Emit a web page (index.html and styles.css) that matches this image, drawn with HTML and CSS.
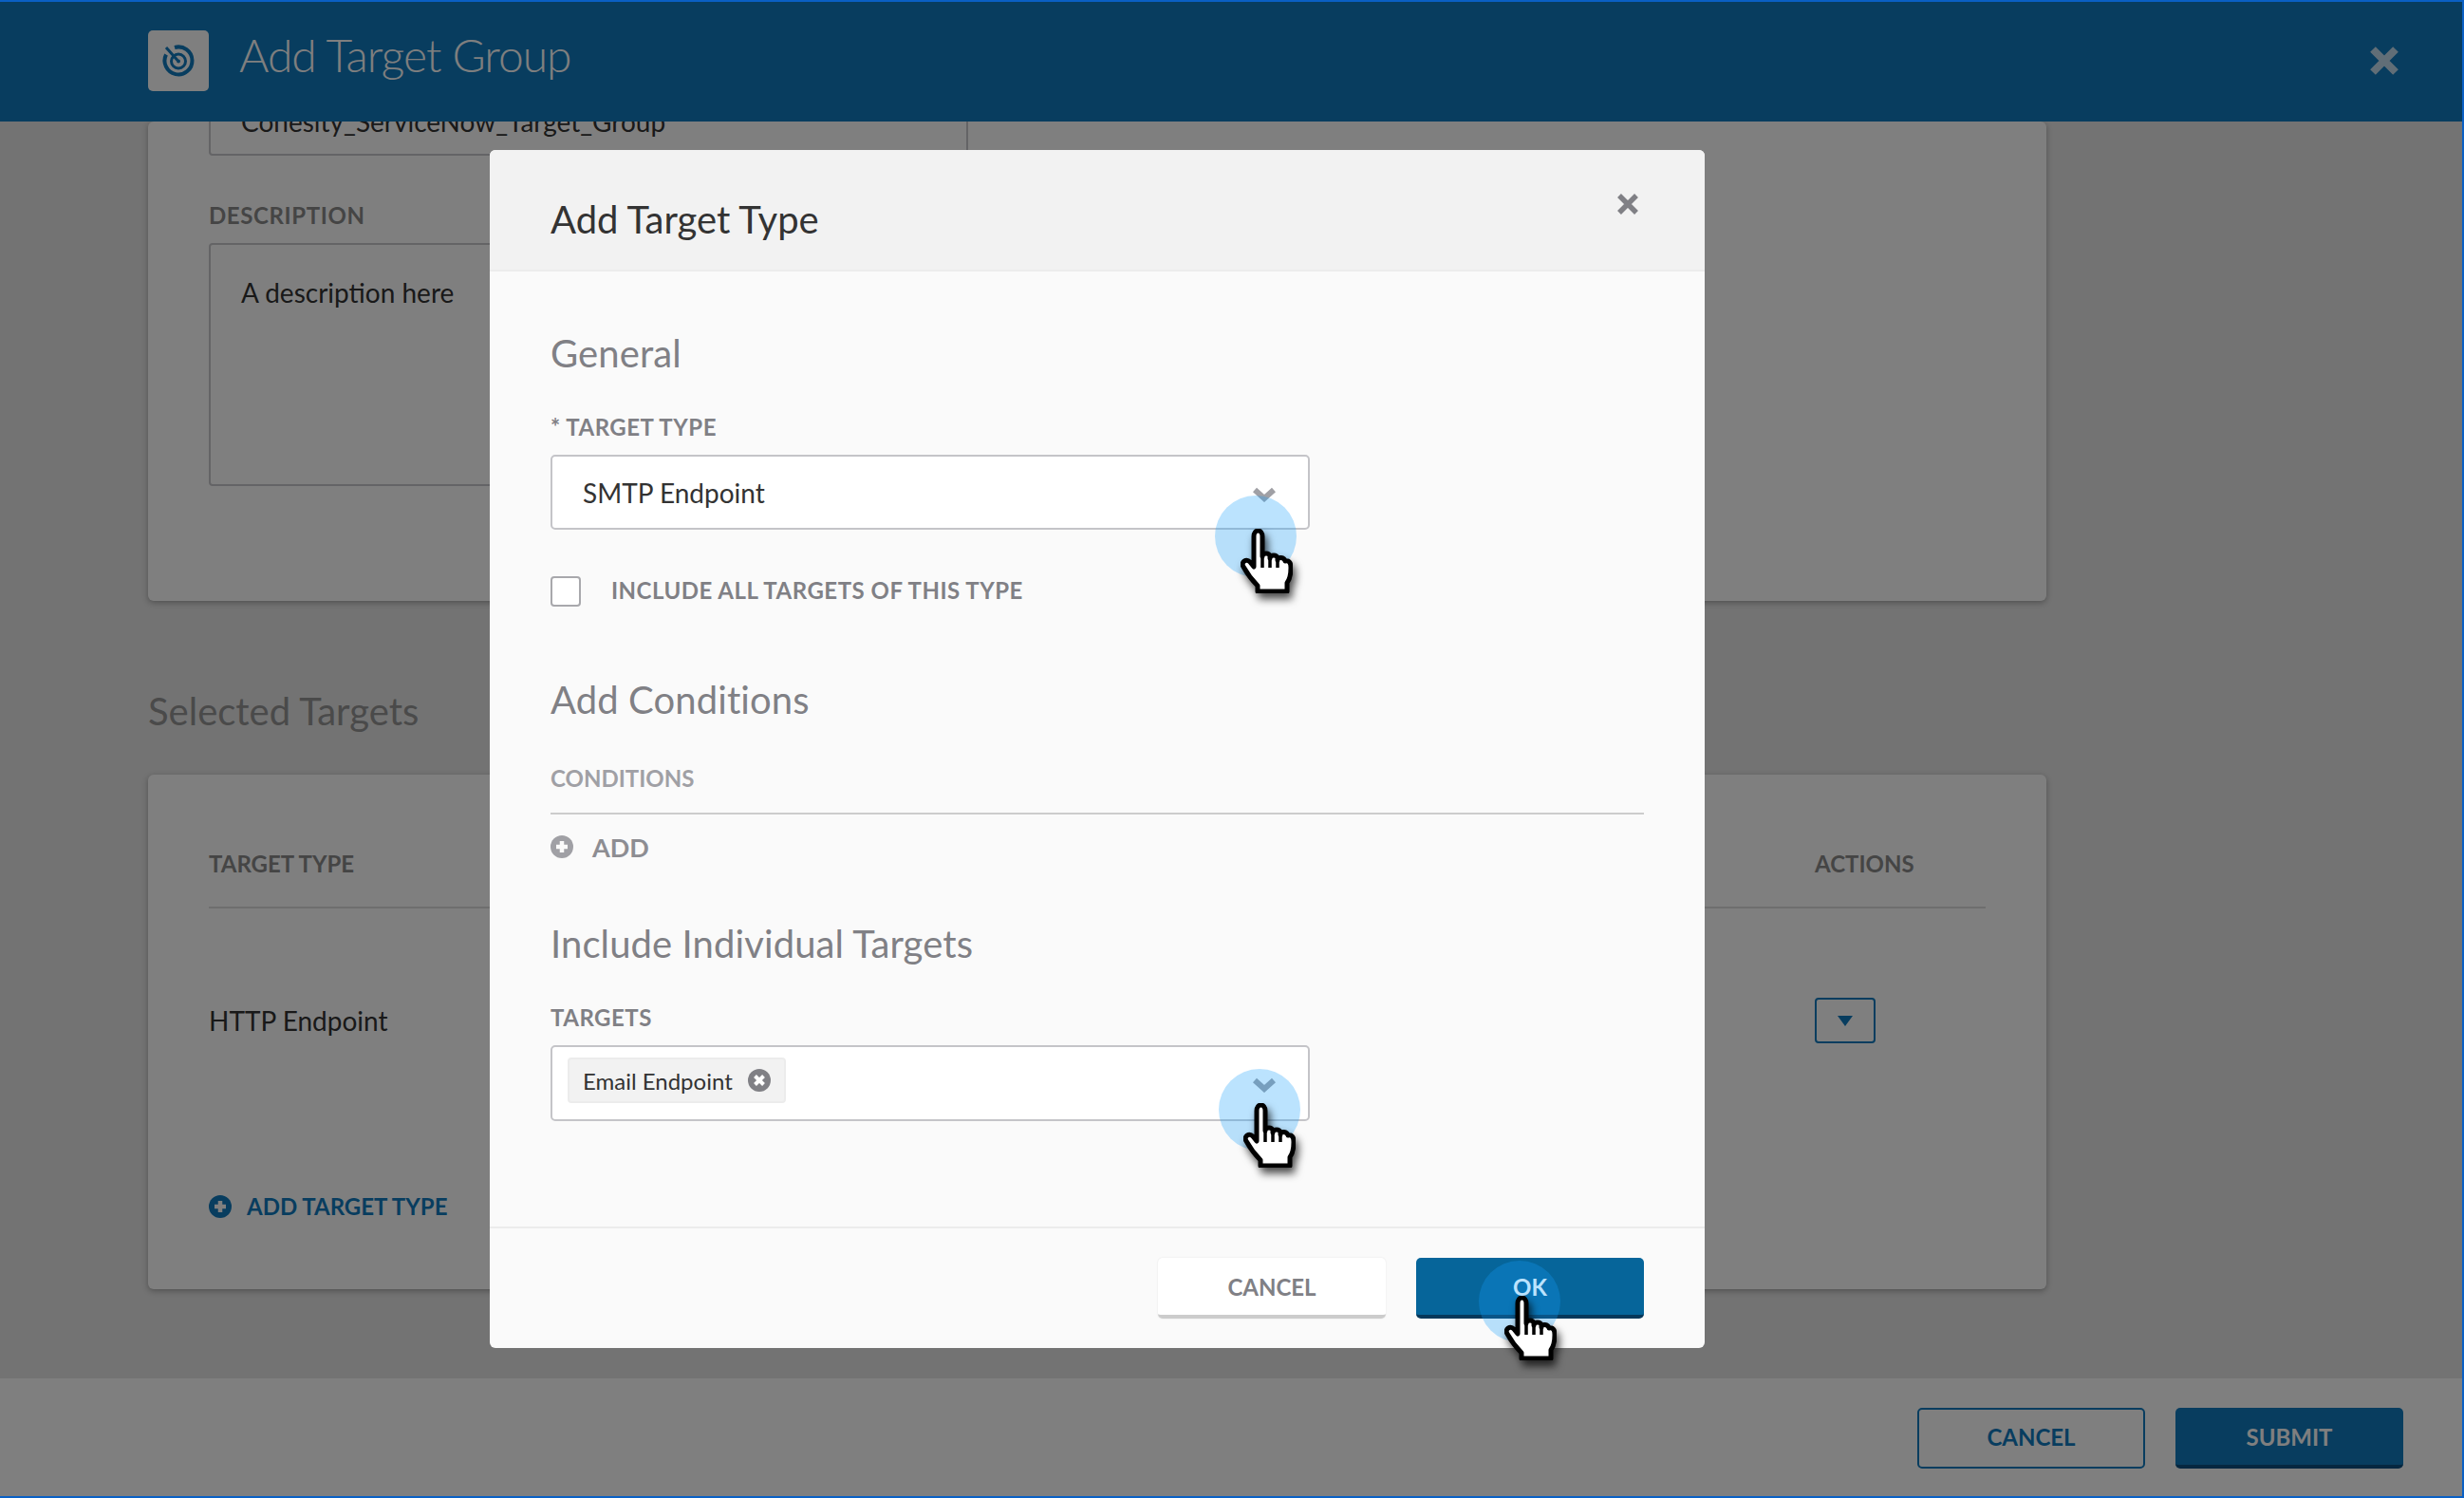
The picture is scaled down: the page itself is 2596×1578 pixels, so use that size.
FILE: index.html
```html
<!DOCTYPE html>
<html lang="en">
<head>
<meta charset="UTF-8">
<title>Add Target Group</title>
<link rel="stylesheet" href="styles.css">
</head>
<body>
<svg class="defs" width="0" height="0">
  <symbol id="hand" viewBox="0 0 55 68">
    <path d="M14 8c0-8 9-8 9 0v21c0-4 8-4 8 0v2c0-4 8-4 8 0v2c0-4 7-3 8 1 5-1 6 3 6 7 0 8-1 12-4 16v9H18v-6C13 55 8 49 3 40c-3-5 3-9 7-5l4 5z" fill="#fff" stroke="#000" stroke-width="5" stroke-linejoin="round"/>
    <path d="M23 28v13M31 30v11M39 32v9" fill="none" stroke="#000" stroke-width="3.5"/>
  </symbol>
</svg>
<div class="frame">
  <header class="topbar">
    <div class="topbar-icon">
      <svg width="38" height="38" viewBox="0 0 38 38" fill="none" stroke="#107abe">
        <path d="M6 12.500A14.500 14.500 0 1 0 15 5" stroke-width="4"/>
        <circle cx="19" cy="19.500" r="7.500" stroke-width="3"/>
        <circle cx="19" cy="19.500" r="2" fill="#107abe" stroke="none"/>
        <path d="M18 18.500L6 5" stroke-width="3"/>
      </svg>
    </div>
    <h1 class="topbar-title">Add Target Group</h1>
    <svg class="topbar-close" width="32" height="32" viewBox="0 0 32 32"><path d="M4 4l24 24M28 4L4 28" stroke="#fff" stroke-width="8"/></svg>
  </header>
  <main class="content">
    <section class="card card-details">
      <div class="field-box field-name">Cohesity_ServiceNow_Target_Group</div>
      <div class="field-label">DESCRIPTION</div>
      <div class="field-box field-desc">A description here</div>
    </section>
    <h2 class="section-title">Selected Targets</h2>
    <section class="card card-targets">
      <div class="table-head">
        <span>TARGET TYPE</span>
        <span class="col-actions">ACTIONS</span>
      </div>
      <div class="table-row">
        <span>HTTP Endpoint</span>
        <span class="col-actions"><button class="action-btn"><i class="caret"></i></button></span>
      </div>
      <div class="add-link">
        <svg width="24" height="24" viewBox="0 0 24 24"><circle cx="12" cy="12" r="12" fill="#107abe"/><path d="M12 6v12M6 12h12" stroke="#fff" stroke-width="4.5"/></svg>
        ADD TARGET TYPE
      </div>
    </section>
  </main>
  <footer class="pagefoot">
    <button class="btn btn-outline">CANCEL</button>
    <button class="btn btn-primary">SUBMIT</button>
  </footer>

  <div class="dim"></div>

  <div class="modal">
    <div class="modal-head">
      <h3>Add Target Type</h3>
      <svg class="modal-close" width="24" height="24" viewBox="0 0 24 24"><path d="M3 3l18 18M21 3L3 21" stroke="#808085" stroke-width="5.5"/></svg>
    </div>
    <div class="modal-body">
      <h4 class="group-title group-first">General</h4>
      <div class="label">* TARGET TYPE</div>
      <div class="select">
        <span>SMTP Endpoint</span>
        <svg class="chevron" width="24" height="16" viewBox="0 0 24 16"><path d="M2 3l10 9 10-9" fill="none" stroke="#a0a0a5" stroke-width="6"/></svg>
      </div>
      <div class="check-row">
        <span class="checkbox"></span>
        <span class="check-label">INCLUDE ALL TARGETS OF THIS TYPE</span>
      </div>
      <h4 class="group-title group-cond">Add Conditions</h4>
      <div class="label label-light">CONDITIONS</div>
      <div class="add-row">
        <svg width="24" height="24" viewBox="0 0 24 24"><circle cx="12" cy="12" r="12" fill="#a0a0a5"/><path d="M12 6v12M6 12h12" stroke="#fafafa" stroke-width="4.5"/></svg>
        ADD
      </div>
      <h4 class="group-title group-indiv">Include Individual Targets</h4>
      <div class="label">TARGETS</div>
      <div class="select select-tags">
        <span class="tag">Email Endpoint
          <svg width="24" height="24" viewBox="0 0 24 24"><circle cx="12" cy="12" r="12" fill="#808085"/><path d="M7.500 7.500l9 9M16.500 7.500l-9 9" stroke="#fff" stroke-width="4"/></svg>
        </span>
        <svg class="chevron" width="24" height="16" viewBox="0 0 24 16"><path d="M2 3l10 9 10-9" fill="none" stroke="#a0a0a5" stroke-width="6"/></svg>
      </div>
    </div>
    <div class="modal-foot">
      <button class="btn btn-white">CANCEL</button>
      <button class="btn btn-ok">OK</button>
    </div>
  </div>

  <!-- click markers from the screen recording -->
  <span class="click click-1"></span>
  <svg class="pointer pointer-1"><use href="#hand"/></svg>
  <span class="click click-2"></span>
  <svg class="pointer pointer-2"><use href="#hand"/></svg>
  <span class="click click-3"></span>
  <svg class="pointer pointer-3"><use href="#hand"/></svg>
</div>
</body>
</html>
```

FILE: styles.css
```css
* {
  box-sizing: border-box;
}
html, body {
  margin: 0;
  padding: 0;
  height: 100%;
}
body {
  font-family: Lato, "Open Sans", sans-serif;
  overflow: hidden;
  background-color: #e6e6e6;
}
.defs {
  position: absolute;
}
.frame {
  position: relative;
  height: 1578px;
  display: flex;
  flex-direction: column;
  overflow: hidden;
  background-color: #e6e6e6;
}
.frame::after {
  content: "";
  position: absolute;
  inset: 0;
  border: 2px solid #0a60c4;
  border-left: 0;
  z-index: 9;
  pointer-events: none;
}

/* top bar */
.topbar {
  height: 128px;
  flex: none;
  background-color: #107abe;
  display: flex;
  align-items: center;
  padding: 0 68px 0 156px;
  position: relative;
  z-index: 1;
}
.topbar-icon {
  width: 64px;
  height: 64px;
  background-color: #fff;
  border-radius: 5px;
  display: flex;
  align-items: center;
  justify-content: center;
}
.topbar-title {
  margin: 0 0 14px 32px;
  font-size: 48px;
  font-weight: 300;
  letter-spacing: -1px;
  color: #fff;
  flex: 1;
}
.topbar-close {
  opacity: .75;
}

/* page under the dialog */
.content {
  flex: 1;
  padding: 0 440px 0 156px;
  min-height: 0;
}
.card {
  background-color: #fff;
  border-radius: 6px;
  box-shadow: 0 2px 6px rgba(0, 0, 0, .3);
  padding: 0 64px;
}
.card-details {
  display: flow-root;
  height: 505px;
}
.field-box {
  border: 2px solid #c8c8cc;
  border-radius: 4px;
  font-size: 28px;
  color: #333;
  padding: 0 32px;
}
/* the page is scrolled, the top of this input sits behind the top bar */
.field-name {
  width: 800px;
  height: 62px;
  margin-top: -26px;
  line-height: 28px;
  padding-top: 10px;
}
.field-label {
  margin-top: 48px;
  font-size: 24px;
  font-weight: 700;
  letter-spacing: .6px;
  color: #8a8a8a;
  line-height: 30px;
}
.field-desc {
  width: 800px;
  height: 256px;
  margin-top: 14px;
  padding-top: 33px;
  line-height: 34px;
}
.section-title {
  margin: 93px 0 44px;
  font-size: 40px;
  font-weight: 400;
  line-height: 46px;
  color: #949494;
}
.card-targets {
  height: 542px;
  padding-top: 74px;
}
.table-head {
  display: flex;
  justify-content: space-between;
  height: 67px;
  border-bottom: 2px solid #ddd;
  font-size: 24px;
  font-weight: 700;
  color: #8a8a8a;
  line-height: 40px;
}
.col-actions {
  width: 180px;
}
.table-row {
  display: flex;
  justify-content: space-between;
  align-items: center;
  height: 240px;
  padding-bottom: 4px;
  font-size: 28px;
  color: #333;
}
.action-btn {
  display: flex;
  align-items: center;
  justify-content: center;
  width: 64px;
  height: 48px;
  background-color: #fff;
  border: 2px solid #107abe;
  border-radius: 4px;
  padding: 0;
}
.caret {
  border-left: 8px solid transparent;
  border-right: 8px solid transparent;
  border-top: 11px solid #107abe;
}
.add-link {
  display: flex;
  align-items: center;
  gap: 16px;
  margin-top: 59px;
  font-size: 24px;
  font-weight: 700;
  color: #107abe;
}
.pagefoot {
  height: 126px;
  flex: none;
  background-color: #fff;
  display: flex;
  justify-content: flex-end;
  gap: 32px;
  padding: 31px 64px 0 0;
}

/* buttons */
.btn {
  width: 240px;
  height: 64px;
  border-radius: 5px;
  font-family: inherit;
  font-size: 24px;
  font-weight: 700;
  padding: 0;
}
.btn-outline {
  background-color: #fff;
  color: #107abe;
  border: 2px solid #107abe;
  padding-bottom: 3px;
}
.btn-primary {
  background-color: #107abe;
  color: #fff;
  border: 0;
  border-bottom: 4px solid #0c4f80;
}
.btn-white {
  background-color: #fff;
  color: #808085;
  border: 0;
  box-shadow: 0 0 2px rgba(0, 0, 0, .1);
  border-bottom: 4px solid #ccc;
}
.btn-ok {
  background-color: #06659a;
  color: #fff;
  border: 0;
  border-bottom: 4px solid #06385a;
}

/* overlay + dialog */
.dim {
  position: absolute;
  inset: 0;
  background-color: rgba(0, 0, 0, .5);
  z-index: 2;
}
.modal {
  position: absolute;
  left: 516px;
  top: 158px;
  width: 1280px;
  height: 1262px;
  z-index: 3;
  background-color: #fafafa;
  border-radius: 6px;
  display: flex;
  flex-direction: column;
  overflow: hidden;
}
.modal-head {
  height: 128px;
  flex: none;
  background-color: #f2f2f2;
  border-bottom: 2px solid #ececec;
  padding: 0 64px;
  display: flex;
  align-items: center;
  justify-content: space-between;
}
.modal-head h3 {
  margin: 20px 0 0;
  font-size: 40px;
  font-weight: 400;
  color: #333;
}
.modal-close {
  margin: -12px 5px 0 0;
}
.modal-body {
  flex: 1;
  padding: 0 64px;
}
.group-title {
  margin: 0;
  font-size: 40px;
  font-weight: 400;
  letter-spacing: .1px;
  line-height: 48px;
  color: #808085;
}
.group-first {
  margin-top: 62px;
}
.group-cond {
  margin-top: 74px;
}
.group-indiv {
  margin-top: 55px;
}
.label {
  margin-top: 39px;
  font-size: 24px;
  font-weight: 700;
  letter-spacing: .5px;
  line-height: 30px;
  color: #808085;
}
.label-light {
  color: #a0a0a5;
  letter-spacing: 0;
  margin-top: 44px;
  padding-bottom: 21px;
  border-bottom: 2px solid #ccc;
}
.select {
  position: relative;
  width: 800px;
  height: 79px;
  margin-top: 14px;
  background-color: #fff;
  border: 2px solid #c4c4c8;
  border-radius: 5px;
  padding: 0 32px;
  display: flex;
  align-items: center;
  font-size: 28px;
  color: #333;
}
.select-tags {
  height: 80px;
  padding-left: 16px;
}
.chevron {
  position: absolute;
  right: 34px;
  top: 32px;
}
.tag {
  display: flex;
  align-items: center;
  gap: 16px;
  height: 48px;
  margin-bottom: 6px;
  padding: 0 14px 0 14px;
  background-color: #f2f2f2;
  border: 2px solid #ececec;
  border-radius: 4px;
  font-size: 24px;
}
.check-row {
  display: flex;
  align-items: center;
  gap: 32px;
  margin-top: 49px;
  font-size: 24px;
  font-weight: 700;
  letter-spacing: .5px;
  color: #808085;
}
.check-label {
  margin-top: -3px;
}
.checkbox {
  width: 32px;
  height: 32px;
  background-color: #fff;
  border: 2px solid #a8a8ac;
  border-radius: 4px;
}
.add-row {
  display: flex;
  align-items: center;
  gap: 20px;
  height: 46px;
  margin-top: 11px;
  font-size: 27px;
  font-weight: 700;
  color: #8d8d92;
}
.modal-foot {
  height: 128px;
  flex: none;
  border-top: 2px solid #ececec;
  display: flex;
  justify-content: flex-end;
  gap: 32px;
  padding: 31px 64px 0 0;
}

/* click markers */
.click {
  position: absolute;
  width: 86px;
  height: 86px;
  border-radius: 50%;
  background-color: rgba(20, 160, 250, .29);
  z-index: 4;
}
.click-1 { left: 1280px; top: 522px; }
.click-2 { left: 1284px; top: 1126px; }
.click-3 { left: 1558px; top: 1328px; }
.pointer {
  position: absolute;
  width: 55px;
  height: 68px;
  z-index: 5;
  overflow: visible;
  filter: drop-shadow(3px 6px 4px rgba(0, 0, 0, .7));
}
.pointer-1 { left: 1307px; top: 557px; }
.pointer-2 { left: 1310px; top: 1162px; }
.pointer-3 { left: 1585px; top: 1365px; }
```
